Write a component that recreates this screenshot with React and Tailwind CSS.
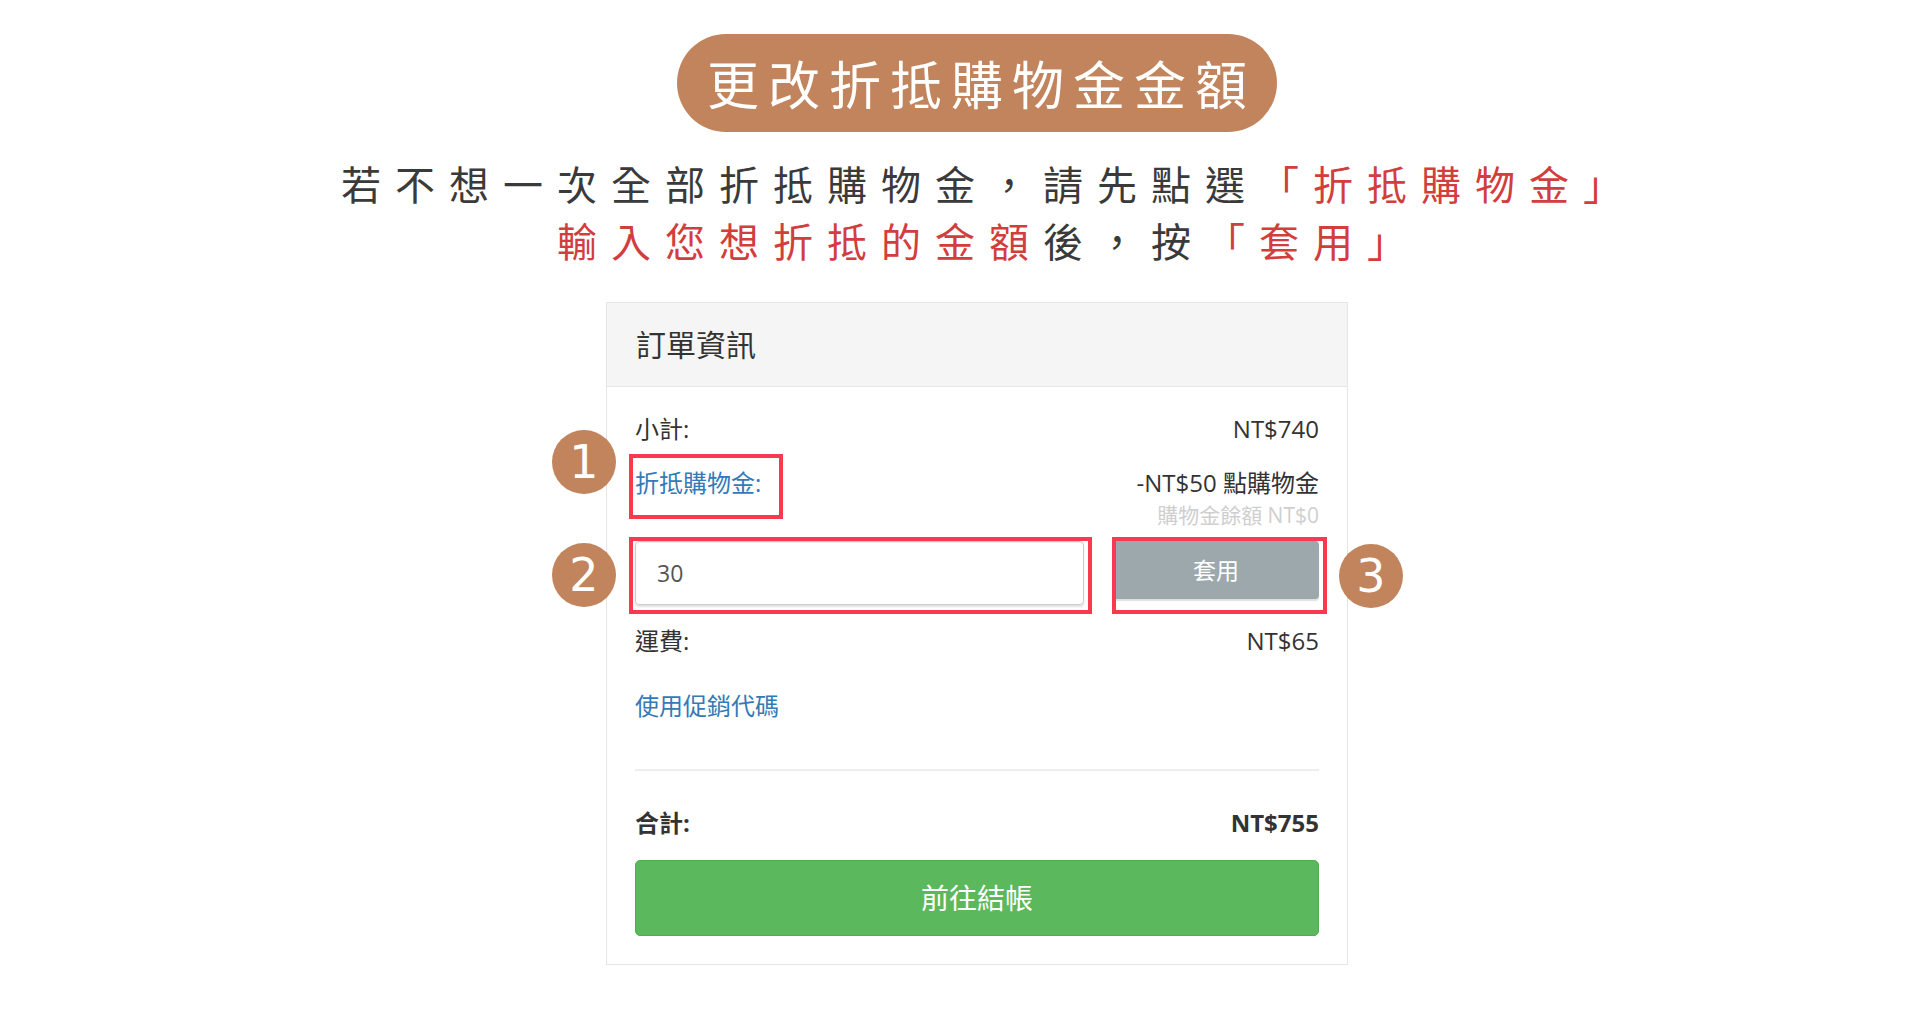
import React from "react";

const CJK = { fontFamily: '"Open Sans", "Noto Sans CJK TC", sans-serif' };

function Badge({ n, className }) {
  return (
    <div
      className={
        "absolute w-[64px] h-[64px] rounded-full bg-[#c2845c] text-white flex items-center justify-center text-[46px] leading-none font-['DejaVu_Sans',sans-serif] " +
        className
      }
    >
      {n}
    </div>
  );
}

function Row({ left, right, bold, className }) {
  return (
    <div
      className={
        "h-[32px] flex items-center justify-between text-[24px] text-[#333] " +
        (bold ? "font-bold " : "") +
        (className || "")
      }
    >
      <span>{left}</span>
      <span>{right}</span>
    </div>
  );
}

export default function App() {
  return (
    <div
      className="w-full min-h-[1022px] bg-white flex flex-col items-center pl-[34px]"
      style={CJK}
    >
      <div className="mt-[34px] w-[600px] h-[98px] rounded-full bg-[#c2845c] flex items-center justify-center pl-[9px] text-white text-[52px] tracking-[9px] font-['Noto_Sans_CJK_TC',sans-serif]">
        更改折抵購物金金額
      </div>

      <div className="mt-[23px] text-center text-[40px] leading-[57px] tracking-[14px] text-[#3a3a3a] pl-[24px] font-['Noto_Sans_CJK_TC',sans-serif]">
        <div>
          若不想一次全部折抵購物金，請先點選
          <span className="text-[#d23d3d]">「折抵購物金」</span>
        </div>
        <div>
          <span className="text-[#d23d3d]">輸入您想折抵的金額</span>後，按
          <span className="text-[#d23d3d]">「套用」</span>
        </div>
      </div>

      <div className="relative mt-[33px] w-[742px] border border-[#e6e6e6] bg-white">
        <div className="h-[84px] bg-[#f5f5f5] border-b border-[#e6e6e6] px-[29px] flex items-center text-[30px] text-[#333]">
          訂單資訊
        </div>

        <div className="px-[28px] pt-[26px] pb-[28px]">
          <Row left="小計:" right="NT$740" />

          <div className="mt-[22px] flex justify-between">
            <div className="h-[32px] flex items-center text-[24px] text-[#337ab7]">
              折抵購物金:
            </div>
            <div className="flex flex-col items-end">
              <div className="h-[32px] flex items-center text-[24px] text-[#333]">
                -NT$50 點購物金
              </div>
              <div className="mt-[6px] h-[22px] flex items-center text-[21px] text-[#cfcfcf]">
                購物金餘額 NT$0
              </div>
            </div>
          </div>

          <div className="mt-[14px] flex items-start gap-[29px]">
            <div className="flex-1 h-[64px] border border-[#ccc] rounded-[4px] shadow-[inset_0_1px_1px_rgba(0,0,0,0.075),0_2px_2px_rgba(0,0,0,0.12)] flex items-center pl-[21px] text-[23px] text-[#555]">
              30
            </div>
            <button className="w-[206px] h-[58px] rounded-[4px] bg-[#9da8ad] shadow-[0_2px_1px_rgba(0,0,0,0.12)] text-white text-[23px] flex items-center justify-center">
              套用
            </button>
          </div>

          <Row className="mt-[20px]" left="運費:" right="NT$65" />

          <div className="mt-[33px] h-[32px] flex items-center text-[24px] text-[#337ab7]">
            使用促銷代碼
          </div>

          <div className="mt-[47px] h-[2px] bg-[#eeeeee]" />

          <Row className="mt-[36px]" bold left="合計:" right="NT$755" />

          <button className="mt-[21px] w-full h-[76px] rounded-[5px] bg-[#5cb85c] border border-[#4cae4c] text-white text-[28px] flex items-center justify-center">
            前往結帳
          </button>
        </div>

        {/* annotations */}
        <div className="absolute left-[22px] top-[151px] w-[154px] h-[65px] border-4 border-[#f8394f]" />
        <div className="absolute left-[22px] top-[234px] w-[463px] h-[77px] border-4 border-[#f8394f]" />
        <div className="absolute left-[505px] top-[234px] w-[215px] h-[77px] border-4 border-[#f8394f]" />
        <Badge n="1" className="left-[-55px] top-[127px]" />
        <Badge n="2" className="left-[-55px] top-[240px]" />
        <Badge n="3" className="left-[732px] top-[241px]" />
      </div>
    </div>
  );
}
